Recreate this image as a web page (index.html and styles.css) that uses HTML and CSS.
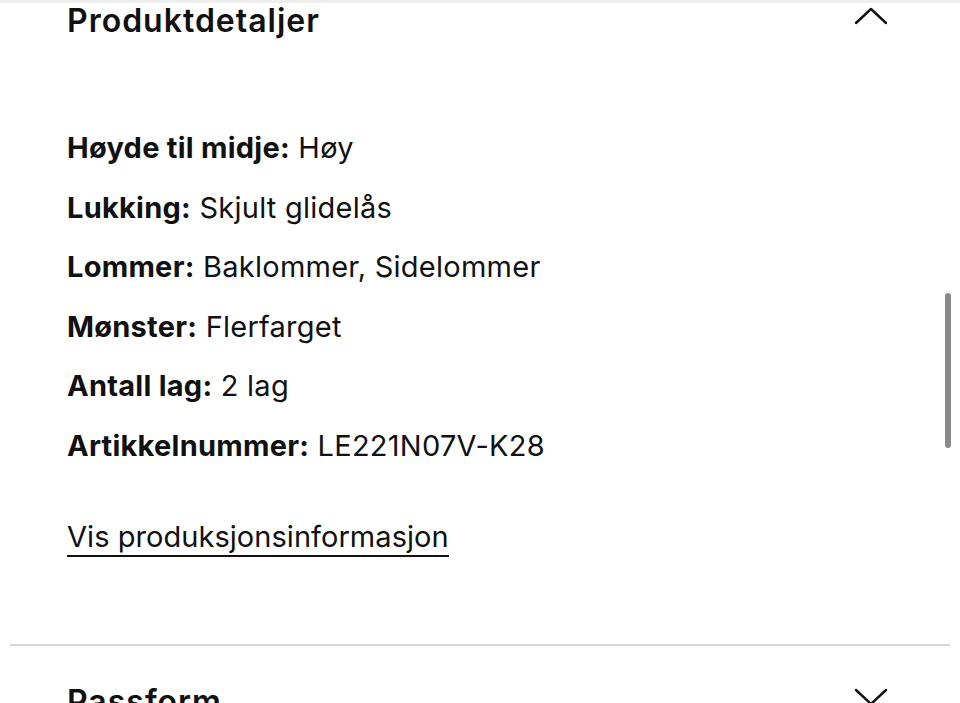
FILE: index.html
```html
<!DOCTYPE html>
<html lang="no">
<head>
  <meta charset="UTF-8">
  <meta name="viewport" content="width=device-width, initial-scale=1.0">
  <title>Produktdetaljer</title>
  <link rel="stylesheet" href="styles.css">
</head>
<body>
  <div class="top-strip"></div>

  <section class="accordion open">
    <div class="accordion-header">
      <h2>Produktdetaljer</h2>
      <svg class="chevron" width="36" height="20" viewBox="0 0 36 20">
        <path d="M3 17 L18 3 L33 17" fill="none" stroke="#111" stroke-width="2.4" stroke-linecap="round" stroke-linejoin="round"/>
      </svg>
    </div>

    <ul class="details">
      <li><strong>Høyde til midje:</strong> Høy</li>
      <li><strong>Lukking:</strong> Skjult glidelås</li>
      <li><strong>Lommer:</strong> Baklommer, Sidelommer</li>
      <li><strong>Mønster:</strong> Flerfarget</li>
      <li><strong>Antall lag:</strong> 2 lag</li>
      <li><strong>Artikkelnummer:</strong> LE221N07V-K28</li>
    </ul>

    <a href="#" class="info-link">Vis produksjonsinformasjon</a>
  </section>

  <hr class="divider">

  <section class="accordion">
    <div class="accordion-header">
      <h2>Passform</h2>
      <svg class="chevron" width="36" height="20" viewBox="0 0 36 20">
        <path d="M3 3 L18 17 L33 3" fill="none" stroke="#111" stroke-width="2.4" stroke-linecap="round" stroke-linejoin="round"/>
      </svg>
    </div>
  </section>

  <div class="scrollbar"></div>
</body>
</html>
```

FILE: styles.css
```css
body {
  font-family: Inter, "Liberation Sans", Arial, sans-serif;
  background-color: #ffffff;
  color: #111111;
  margin: 0;
  padding: 0;
  height: 703px;
  overflow: hidden;
  position: relative;
}

.top-strip {
  height: 3px;
  background-color: #efefef;
}

.accordion {
  padding: 0 71px 0 67px;
}

.accordion-header {
  display: flex;
  justify-content: space-between;
  align-items: flex-start;
}

.accordion-header h2 {
  margin: 0;
  font-size: 32px;
  font-weight: 600;
  line-height: 36px;
  letter-spacing: 1px;
}

.chevron {
  margin-top: 3px;
}

.details {
  list-style: none;
  margin: 93px 0 0;
  padding: 0;
}

.details li {
  font-size: 29px;
  line-height: 32px;
  height: 32px;
  margin-bottom: 27.6px;
  letter-spacing: 0.25px;
}

.details strong {
  font-weight: 700;
}

.info-link {
  display: inline-block;
  margin-top: 31px;
  font-size: 29px;
  line-height: 32px;
  letter-spacing: 0.05px;
  color: #111111;
  text-decoration: none;
  border-bottom: 2px solid #111111;
  padding-bottom: 2px;
}

.divider {
  border: 0;
  height: 2px;
  background-color: #d6d6d6;
  margin: 87px 10px 0;
}

.accordion + .divider + .accordion .accordion-header {
  margin-top: 38px;
}

.scrollbar {
  position: absolute;
  right: 9px;
  top: 293px;
  width: 6px;
  height: 155px;
  border-radius: 3px;
  background-color: #8a8a8a;
}
```
